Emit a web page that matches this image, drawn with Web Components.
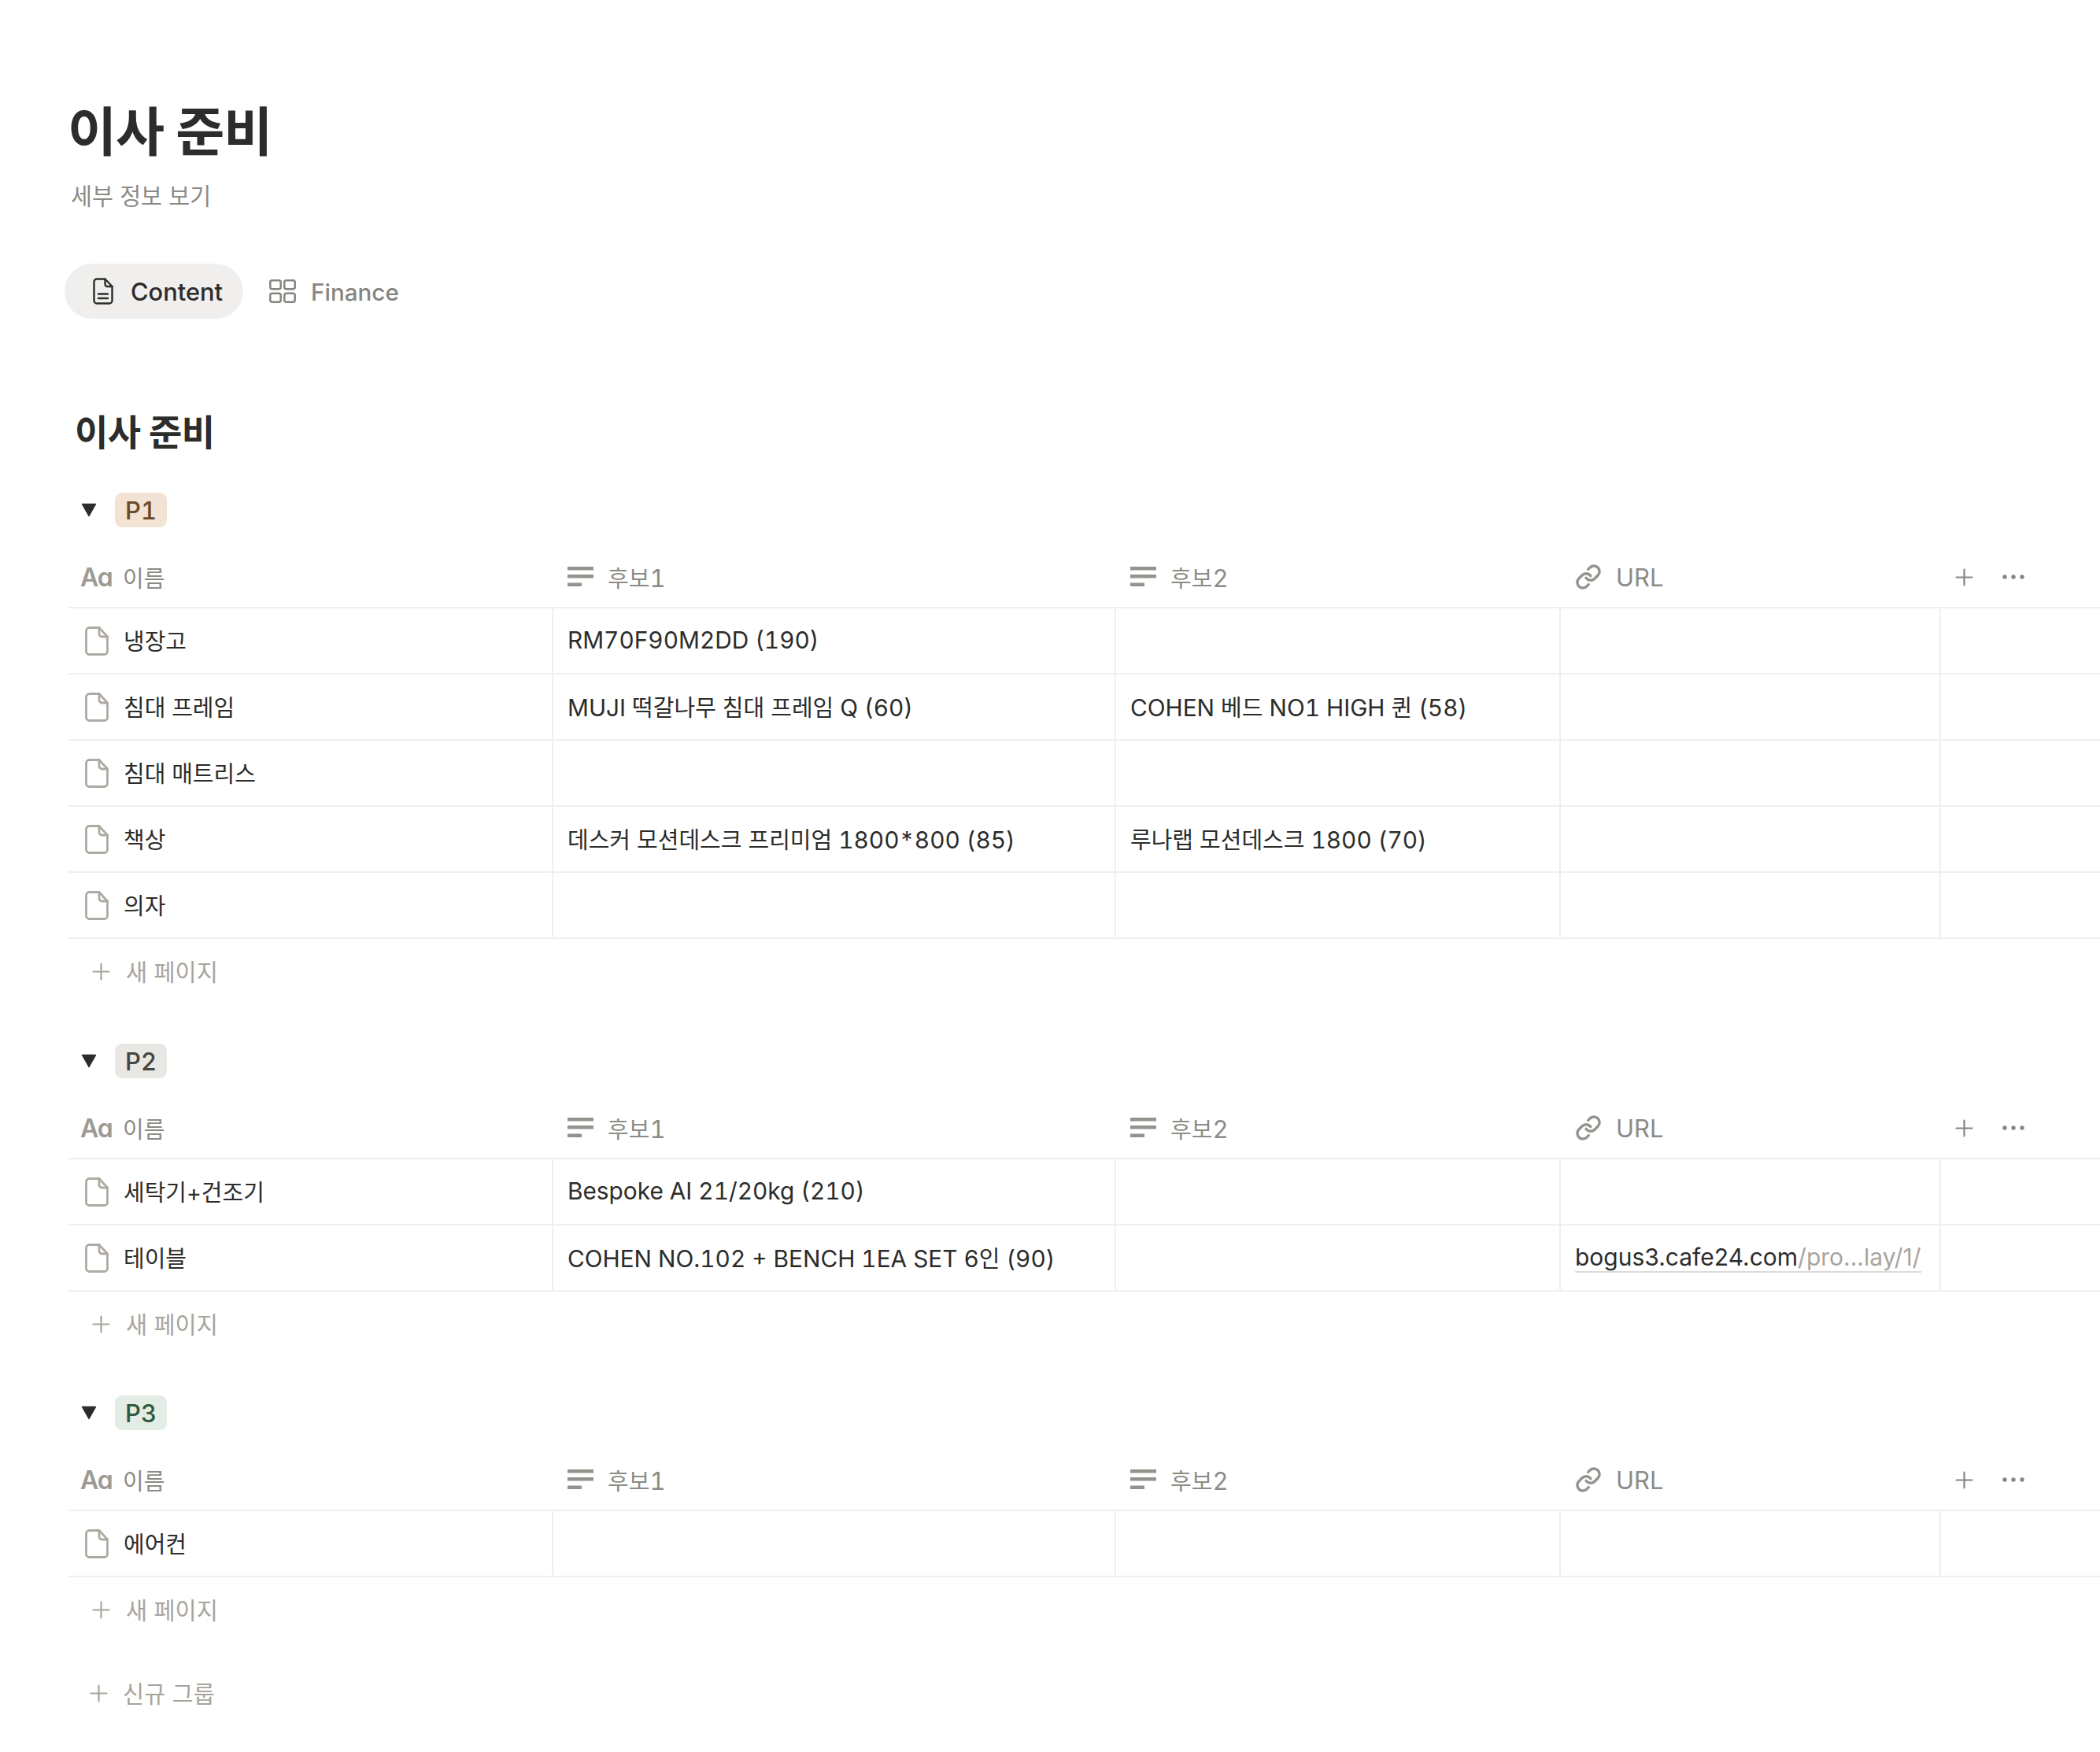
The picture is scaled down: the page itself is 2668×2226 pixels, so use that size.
<!DOCTYPE html>
<html lang="ko">
<head>
<meta charset="utf-8">
<title>이사 준비</title>
<style>
  html, body { margin: 0; padding: 0; background: #fff; }
  body {
    font-family: Inter, "Noto Sans CJK KR", "Noto Sans", sans-serif;
    color: #2c2c2b;
    overflow: hidden;
    height: 2226px;
  }
</style>
</head>
<body>
<page-head title="이사 준비" sub="세부 정보 보기"></page-head>
<view-tabs>
  <view-tab active icon="doc" label="Content"></view-tab>
  <view-tab icon="grid" label="Finance"></view-tab>
</view-tabs>
<board-title>이사 준비</board-title>

<db-group tag="P1" tone="brown" style="--gap-top:23px">
  <db-row name="냉장고" a="RM70F90M2DD (190)"></db-row>
  <db-row name="침대 프레임" a="MUJI 떡갈나무 침대 프레임 Q (60)" b="COHEN 베드 NO1 HIGH 퀸 (58)"></db-row>
  <db-row name="침대 매트리스"></db-row>
  <db-row name="책상" a="데스커 모션데스크 프리미엄 1800*800 (85)" b="루나랩 모션데스크 1800 (70)"></db-row>
  <db-row name="의자"></db-row>
</db-group>

<db-group tag="P2" tone="gray" style="--gap-top:50px">
  <db-row name="세탁기+건조기" a="Bespoke AI 21/20kg (210)"></db-row>
  <db-row name="테이블" a="COHEN NO.102 + BENCH 1EA SET 6인 (90)" host="bogus3.cafe24.com" path="/pro...lay/1/"></db-row>
</db-group>

<db-group tag="P3" tone="green">
  <db-row name="에어컨"></db-row>
</db-group>

<add-line label="신규 그룹" style="--x:114px;--g:19px;margin-top:66px"></add-line>

<script>
const ICONS = {
  doc: `<svg width="26" height="34" viewBox="0 0 26 34" fill="none" stroke="currentColor" stroke-width="2.4" stroke-linejoin="round" stroke-linecap="round"><path d="M5 1.5h10.5L24.5 11v18a3.5 3.5 0 0 1-3.5 3.5H5A3.5 3.5 0 0 1 1.5 29V5A3.5 3.5 0 0 1 5 1.5Z"/><path d="M15.5 1.5V8a3 3 0 0 0 3 3h6"/><path d="M7 20.5h12M7 26h12"/></svg>`,
  page: `<svg width="30" height="37" viewBox="0 0 30 37" fill="none" stroke="currentColor" stroke-width="2.8" stroke-linejoin="round" stroke-linecap="round"><path d="M5.5 1.5H18L28.5 13v18.5a4 4 0 0 1-4 4h-19a4 4 0 0 1-4-4v-26a4 4 0 0 1 4-4Z"/><path d="M18 1.5V9.5a3.5 3.5 0 0 0 3.5 3.5h7"/></svg>`,
  grid: `<svg width="34" height="30" viewBox="0 0 34 30" fill="none" stroke="currentColor" stroke-width="2.5"><rect x="1.3" y="1.3" width="13.4" height="11" rx="2.5"/><rect x="19.3" y="1.3" width="13.4" height="11" rx="2.5"/><rect x="1.3" y="17.7" width="13.4" height="11" rx="2.5"/><rect x="19.3" y="17.7" width="13.4" height="11" rx="2.5"/></svg>`,
  lines: `<svg width="33" height="26" viewBox="0 0 33 26" fill="currentColor"><rect x="0" y="0" width="33" height="4.5"/><rect x="0" y="10" width="33" height="4.5"/><rect x="0" y="20.5" width="18" height="4.5"/></svg>`,
  link: `<svg width="34" height="34" viewBox="0 0 24 24" fill="none" stroke="currentColor" stroke-width="2.4" stroke-linecap="round" stroke-linejoin="round"><path d="M10 13a5 5 0 0 0 7.54.54l3-3a5 5 0 0 0-7.07-7.07l-1.72 1.71"/><path d="M14 11a5 5 0 0 0-7.54-.54l-3 3a5 5 0 0 0 7.07 7.07l1.71-1.71"/></svg>`,
  plus: `<svg width="23" height="23" viewBox="0 0 23 23" fill="none" stroke="currentColor" stroke-width="2.2" stroke-linecap="round"><path d="M11.5 1.5v20M1.5 11.5h20"/></svg>`,
  dots: `<svg width="28" height="6" viewBox="0 0 28 6" fill="currentColor"><circle cx="3" cy="3" r="2.7"/><circle cx="14" cy="3" r="2.7"/><circle cx="25" cy="3" r="2.7"/></svg>`,
  caret: `<svg width="20" height="18" viewBox="0 0 20 18" fill="currentColor" stroke="currentColor" stroke-width="1.5" stroke-linejoin="round"><path d="M1.5 1.5h17L10 16.5Z"/></svg>`
};

const TONES = {
  brown: { bg: "#f2e3d4", fg: "#6d4a2a" },
  gray: { bg: "#e8e7e4", fg: "#46453f" },
  green: { bg: "#e3ede5", fg: "#2f5a3c" }
};

// grid shared by the header and body rows
const COLUMNS = "616px 715px 565px 483px 1fr";

// hangul sits a little smaller than the latin text next to it
const mix = (text) => text.replace(/[\uac00-\ud7a3]+/g, (run) => `<span class="ko">${run}</span>`);

class PageHead extends HTMLElement {
  connectedCallback() {
    const shadow = this.attachShadow({ mode: "open" });
    shadow.innerHTML = `
      <style>
        :host { display: block; padding: 118px 0 0 86px; }
        h1 { margin: 0; font-size: 67.5px; line-height: 100px; font-weight: 700; color: #2c2c2b; letter-spacing: -1px; }
        p { margin: 12px 0 0 4px; font-size: 29.3px; line-height: 40px; color: #8c8b86; }
      </style>
      <h1>${this.getAttribute("title")}</h1>
      <p>${this.getAttribute("sub")}</p>
    `;
  }
}

class ViewTabs extends HTMLElement {
  connectedCallback() {
    const shadow = this.attachShadow({ mode: "open" });
    shadow.innerHTML = `
      <style>
        :host { display: flex; gap: 33px; padding: 65px 0 0 82px; align-items: center; }
      </style>
      <slot></slot>
    `;
  }
}

class ViewTab extends HTMLElement {
  connectedCallback() {
    const shadow = this.attachShadow({ mode: "open" });
    const icon = ICONS[this.getAttribute("icon")];
    shadow.innerHTML = `
      <style>
        :host { display: flex; align-items: center; gap: 19px; height: 70px; font-size: 29.6px; font-weight: 500; color: #87857f; }
        :host([active]) { background: #f0efed; border-radius: 35px; padding: 0 26px 0 36px; color: #2c2c2b; gap: 22px; font-size: 30.8px; }
        svg { display: block; }
        span { padding-top: 1px; }
      </style>
      ${icon}<span>${this.getAttribute("label")}</span>
    `;
  }
}

class BoardTitle extends HTMLElement {
  connectedCallback() {
    const shadow = this.attachShadow({ mode: "open" });
    shadow.innerHTML = `
      <style>
        :host { display: block; padding: 112px 0 0 95px; font-size: 46px; line-height: 64px; font-weight: 700; color: #2c2c2b; letter-spacing: -0.5px; }
      </style>
      <slot></slot>
    `;
  }
}

class DbGroup extends HTMLElement {
  connectedCallback() {
    const shadow = this.attachShadow({ mode: "open" });
    const tone = TONES[this.getAttribute("tone")];
    const head = (icon, label) => `<div class="th">${icon}<span>${mix(label)}</span></div>`;
    shadow.innerHTML = `
      <style>
        :host { display: block; margin-left: 86px; padding-top: var(--gap-top, 49px); }
        .title { display: flex; align-items: center; height: 44px; padding-top: 22px; }
        .caret { display: block; margin-left: 17px; color: #2c2c2b; }
        .caret svg { display: block; }
        .tag { margin-left: 23px; width: 66px; height: 44px; border-radius: 9px; display: flex; align-items: center; justify-content: center;
          background: ${tone.bg}; color: ${tone.fg}; font-size: 31px; font-weight: 500; font-variant-numeric: tabular-nums; }
        .head { display: grid; grid-template-columns: ${COLUMNS}; height: 74px; margin-top: 27px; border-bottom: 2px solid #efefed;
          font-size: 31px; color: #8c8b86; font-variant-numeric: tabular-nums; }
        .ko { font-size: 29px; }
        .th { display: flex; align-items: center; gap: 18px; padding: 0 0 2px 19px; }
        .th:first-child { padding-left: 16px; gap: 14px; }
        .th svg { display: block; color: #95938d; }
        .aa { font-family: Inter, sans-serif; font-size: 32px; font-weight: 600; color: #9b9a94; width: 40px; font-feature-settings: "cv11"; letter-spacing: -1px; }
        .tools { display: flex; align-items: center; padding: 0 0 2px 19px; gap: 37px; color: #87857f; }
        .tools svg { display: block; }
      </style>
      <div class="title"><span class="caret">${ICONS.caret}</span><span class="tag">${this.getAttribute("tag")}</span></div>
      <div class="head">
        <div class="th"><span class="aa">Aa</span><span>${mix("이름")}</span></div>
        ${head(ICONS.lines, "후보1")}
        ${head(ICONS.lines, "후보2")}
        ${head(ICONS.link, "URL")}
        <div class="tools">${ICONS.plus}${ICONS.dots}</div>
      </div>
      <slot></slot>
      <add-line label="새 페이지" style="--x:31px;--g:20px"></add-line>
    `;
  }
}

class DbRow extends HTMLElement {
  connectedCallback() {
    const shadow = this.attachShadow({ mode: "open" });
    const attr = (name) => this.getAttribute(name) || "";
    const url = attr("host")
      ? `<span class="url">${attr("host")}<span class="path">${attr("path")}</span></span>`
      : "";
    shadow.innerHTML = `
      <style>
        :host { display: grid; grid-template-columns: ${COLUMNS}; height: 82px; border-bottom: 2px solid #efefed; font-size: 29.8px; color: #2c2c2b; font-variant-numeric: tabular-nums; }
        .ko { font-size: 29px; }
        .cell { display: flex; align-items: center; padding-left: 18px; border-left: 2px solid #efefed; white-space: pre; overflow: hidden; margin-left: -1px; }
        .cell > span { padding-bottom: 3px; }
        .name { padding-left: 22px; gap: 19px; border-left: 0; margin-left: 0; font-size: 29px; }
        .name svg { display: block; color: #aeaaa2; flex: none; }
        .cell > .url { padding-bottom: 0; border-bottom: 2px solid #dcdbd9; line-height: 36px; font-size: 30px; font-variant-numeric: normal; }
        .path { color: #a8a49c; }
      </style>
      <div class="cell name">${ICONS.page}<span>${attr("name")}</span></div>
      <div class="cell"><span>${mix(attr("a"))}</span></div>
      <div class="cell"><span>${mix(attr("b"))}</span></div>
      <div class="cell">${url}</div>
      <div class="cell"></div>
    `;
  }
}

class AddLine extends HTMLElement {
  connectedCallback() {
    const shadow = this.attachShadow({ mode: "open" });
    shadow.innerHTML = `
      <style>
        :host { display: flex; align-items: center; height: 40px; margin-top: 21px; padding-left: var(--x); gap: var(--g); font-size: 29.5px; color: #a8a49c; }
        svg { display: block; }
        span { padding-bottom: 2px; }
      </style>
      ${ICONS.plus}<span>${this.getAttribute("label")}</span>
    `;
  }
}

customElements.define("page-head", PageHead);
customElements.define("view-tabs", ViewTabs);
customElements.define("view-tab", ViewTab);
customElements.define("board-title", BoardTitle);
customElements.define("add-line", AddLine);
customElements.define("db-group", DbGroup);
customElements.define("db-row", DbRow);
</script>
</body>
</html>
